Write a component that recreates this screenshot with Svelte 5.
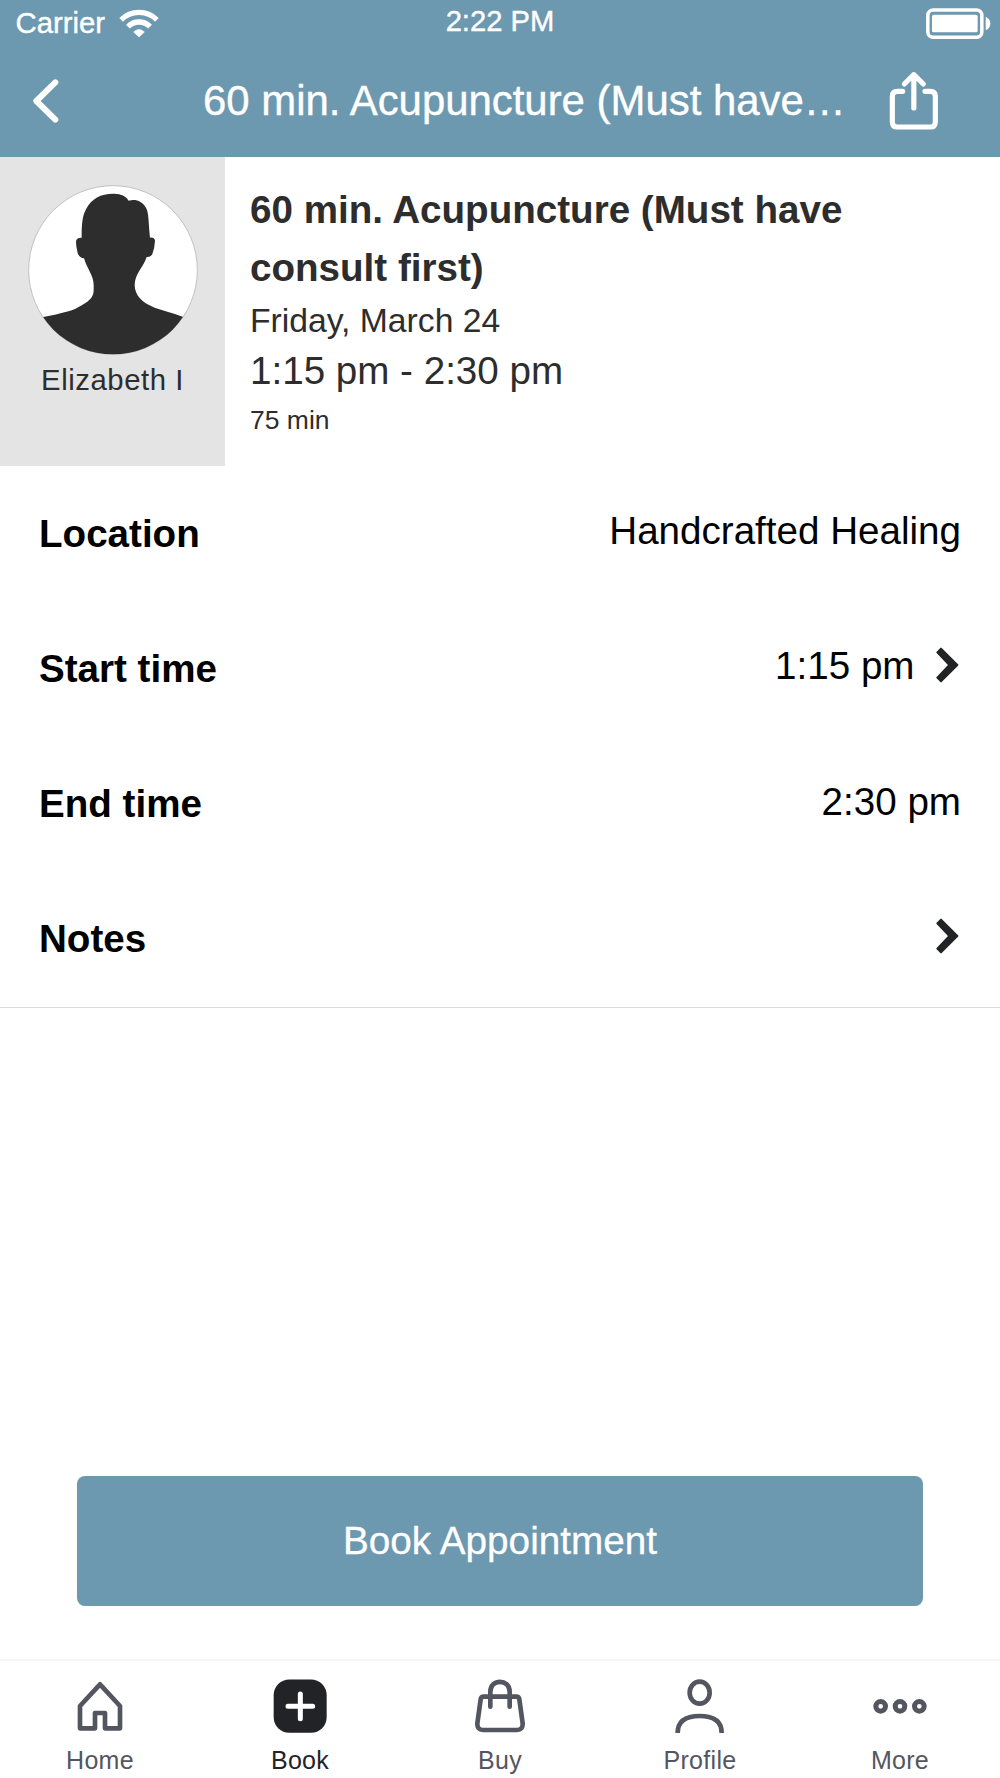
<script>
  const rows = [
    { label: 'Location', value: 'Handcrafted Healing', chevron: false },
    { label: 'Start time', value: '1:15 pm', chevron: true },
    { label: 'End time', value: '2:30 pm', chevron: false },
    { label: 'Notes', value: '', chevron: true }
  ];
  const tabs = ['Home', 'Book', 'Buy', 'Profile', 'More'];
  const active = 'Book';
</script>

<div class="screen">
  <header>
    <div class="status">
      <div class="carrier">
        <span>Carrier</span>
        <svg class="wifi" viewBox="0 0 120 87" fill="none" stroke="#fff" stroke-width="16">
          <path d="M6.3 32.3A76 76 0 0 1 113.7 32.3" />
          <path d="M26.8 52.8A47 47 0 0 1 93.2 52.8" />
          <path d="M60 84L44 69Q60 54 76 69Z" fill="#fff" stroke-width="2" stroke-linejoin="round" />
        </svg>
      </div>
      <span class="clock">2:22 PM</span>
      <svg class="battery" viewBox="0 0 195 93">
        <rect x="5.5" y="6" width="162" height="82" rx="16" fill="none" stroke="#fff" stroke-width="10.5" />
        <rect x="18" y="20" width="137" height="53" rx="5" fill="#fff" />
        <path d="M179 26Q193 32 193 46.500T179 67Z" fill="#fff" />
      </svg>
    </div>
    <div class="nav">
      <svg class="back" viewBox="0 0 84 138" fill="none" stroke="#fff" stroke-width="18" stroke-linecap="round" stroke-linejoin="round">
        <path d="M70 13L13 69L70 125" />
      </svg>
      <h1>60 min. Acupuncture (Must have…</h1>
      <svg class="share" viewBox="0 0 150 180" fill="none" stroke="#fff" stroke-width="15.5" stroke-linecap="round" stroke-linejoin="round">
        <path d="M41 64H25Q10 64 10 79V155Q10 171 25 171H124Q139 171 139 155V79Q139 64 124 64H108" />
        <path d="M74.500 114V14M46 42L74.500 14L103 42" />
      </svg>
    </div>
  </header>

  <section class="summary">
    <div class="staff">
      <svg class="avatar" viewBox="84 90 510 510">
        <defs><clipPath id="round"><circle cx="339" cy="345" r="253" /></clipPath></defs>
        <circle cx="339" cy="345" r="253" fill="#fff" stroke="#b8b8b8" stroke-width="2.500" />
        <path clip-path="url(#round)" fill="#2d2d2d" d="M80 494Q180 479 225 462Q246 451 262 440Q281 425 281 407V390C281 362 262 343 252 310Q238 309 233 294Q226 267 229 255Q233 247 245 248C245 205 247 184 258 163C275 130 302 116 340 116Q373 115 386 137C407 131 426 138 438 158C447 175 445 200 450 248Q463 246 465 257Q464 279 457 297Q452 307 440 306C430 337 404 356 404 391C405 421 425 443 464 458L502 470Q547 482 600 508V610H80Z" />
      </svg>
      <span class="name">Elizabeth I</span>
    </div>
    <div class="details">
      <h2>60 min. Acupuncture (Must have consult first)</h2>
      <p class="date">Friday, March 24</p>
      <p class="time">1:15 pm - 2:30 pm</p>
      <p class="duration">75 min</p>
    </div>
  </section>

  <section class="rows">
    {#each rows as row}
      <div class="row">
        <span class="label">{row.label}</span>
        <span class="value">
          {row.value}
          {#if row.chevron}
            <svg class="chevron" viewBox="0 0 69 108" fill="#222327" stroke="#222327" stroke-width="6" stroke-linejoin="round">
              <path d="M15 5L64 54L15 103L4 92L40 54L4 16Z" />
            </svg>
          {/if}
        </span>
      </div>
    {/each}
  </section>

  <button class="book">Book Appointment</button>

  <nav class="tabs">
    {#each tabs as tab}
      <div class="tab" class:active={tab === active}>
        <svg viewBox="0 0 180 180" fill="none" stroke="currentColor" stroke-width="14" stroke-linejoin="round">
          {#if tab === 'Home'}
            <path d="M90 25L150 90V157H105V111H75V157H30V90Z" />
          {:else if tab === 'Book'}
            <rect x="11" y="10.500" width="159" height="160" rx="47" fill="currentColor" stroke="none" />
            <path d="M54 91H128M91 54V128" stroke="#fff" stroke-width="15" stroke-linecap="round" />
          {:else if tab === 'Buy'}
            <path d="M41 62H139Q147 62 148 70L158 142Q159 162 141 162H39Q21 162 22 142L32 70Q33 62 41 62Z" />
            <path d="M61 92V47C61 8 119 8 119 47V92" stroke-linecap="round" />
          {:else if tab === 'Profile'}
            <ellipse cx="89" cy="50" rx="30" ry="33" />
            <path d="M23 171C23 132 52 120 89 120S155 132 155 171" />
          {:else}
            <circle cx="32" cy="91" r="14.500" stroke-width="15" />
            <circle cx="90" cy="91" r="14.500" stroke-width="15" />
            <circle cx="148" cy="91" r="14.500" stroke-width="15" />
          {/if}
        </svg>
        <span>{tab}</span>
      </div>
    {/each}
  </nav>
</div>

<style>
  :global(body) { background: #fff; }
  .screen {
    width: 1000px;
    height: 1778px;
    display: flex;
    flex-direction: column;
    overflow: hidden;
    background: #fff;
    color: #2d2d2d;
    font-family: "Liberation Sans", Arial, sans-serif;
    white-space: nowrap;
  }
  svg { display: block; flex: none; }
  h1, h2, p { margin: 0; font-weight: 400; }
  header { height: 157px; background: #6c98b0; color: #fff; -webkit-text-stroke: 0.4px #fff; }
  .status {
    height: 46px;
    display: grid;
    grid-template-columns: 1fr auto 1fr;
    align-items: start;
    font-size: 29.5px;
  }
  .carrier { display: flex; gap: 13px; padding-left: 15.5px; line-height: 46px; }
  .carrier span { width: 90px; font-size: 29.3px; }
  .wifi { width: 40px; height: 29px; margin-top: 9px; }
  .clock { line-height: 43px; font-size: 29.2px; }
  .battery { width: 65px; height: 31px; margin: 8px 9px 0 0; justify-self: end; }
  .nav { height: 111px; display: flex; align-items: center; }
  .back { width: 28px; height: 46px; margin: 0 143px 2px 32px; }
  h1 { flex: none; width: 640px; font-size: 41.9px; line-height: 109px; margin-bottom: 2px; }
  .share { width: 50px; height: 60px; margin: 0 0 3px 46px; }
  .summary { display: flex; height: 309px; }
  .staff {
    width: 225px;
    background: #e4e4e4;
    display: flex;
    flex-direction: column;
    align-items: center;
    padding-top: 28px;
    box-sizing: border-box;
  }
  .avatar { width: 170px; height: 170px; }
  .name { font-size: 29.3px; letter-spacing: 0.55px; line-height: 34px; margin-top: 8px; }
  .details { padding: 24px 0 0 25px; }
  h2 { width: 640px; font-size: 38.6px; font-weight: 700; line-height: 58px; white-space: normal; }
  .date { font-size: 33.7px; line-height: 47px; }
  .time { font-size: 38.6px; line-height: 54px; }
  .duration { font-size: 26.5px; line-height: 45px; }
  .rows { color: #000; font-size: 38.6px; border-bottom: 1px solid #d5dce0; }
  .row { height: 135.25px; padding: 0 39px; display: flex; align-items: center; justify-content: space-between; }
  .label { font-weight: 700; }
  .value { display: flex; align-items: center; gap: 21px; padding-bottom: 5px; }
  .chevron { width: 23px; height: 36px; margin: 0 2.5px 2px 0; }
  .book {
    width: 845.5px;
    height: 130px;
    margin: auto auto 53px;
    padding: 0 0 1px;
    border: 0;
    border-radius: 8px;
    background: #6c98b0;
    color: #fff;
    font: 38.7px "Liberation Sans", Arial, sans-serif;
    -webkit-text-stroke: 0.3px #fff;
  }
  .tabs { height: 117px; border-top: 2px solid #f6f6f7; display: grid; grid-template-columns: repeat(5, 200px); }
  .tab { display: flex; flex-direction: column; align-items: center; padding-top: 15px; color: #54565f; }
  .tab.active { color: #222327; }
  .tab svg { width: 60px; height: 60px; }
  .tab span { font-size: 25px; letter-spacing: 0.3px; line-height: 36px; margin-top: 6px; }
</style>
